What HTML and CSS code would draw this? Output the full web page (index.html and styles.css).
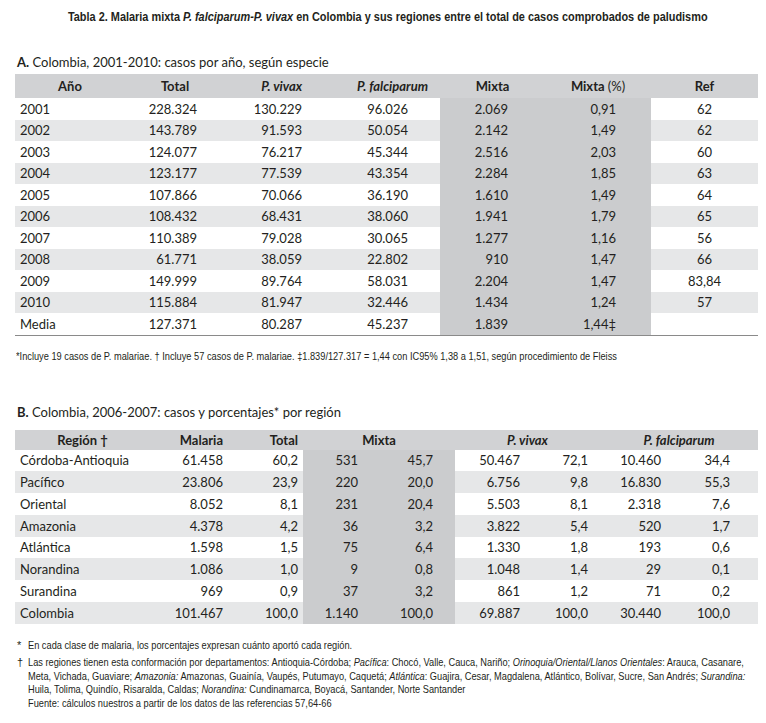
FILE: index.html
```html
<!DOCTYPE html>
<html lang="es">
<head>
<meta charset="utf-8">
<title>Tabla 2</title>
<link rel="stylesheet" href="styles.css">
</head>
<body>
<div class="page">
  <h1 class="title"><span class="cond-c">Tabla 2. Malaria mixta <i>P. falciparum-P. vivax</i> en Colombia y sus regiones entre el total de casos comprobados de paludismo</span></h1>

  <h2 class="sub sub-a"><b>A.</b> Colombia, 2001-2010: casos por año, según especie</h2>
  <table class="tbl ta">
    <colgroup>
      <col class="a1"><col class="a2"><col class="a3"><col class="a4"><col class="a5"><col class="a6"><col class="a7">
    </colgroup>
    <thead>
      <tr>
        <th class="c">Año</th>
        <th class="c">Total</th>
        <th class="r ha3"><i>P. vivax</i></th>
        <th class="r ha4"><i>P. falciparum</i></th>
        <th class="c">Mixta</th>
        <th class="c">Mixta <span class="pct">(%)</span></th>
        <th class="c">Ref</th>
      </tr>
    </thead>
    <tbody>
      <tr><td class="l">2001</td><td class="r da2">228.324</td><td class="r da3">130.229</td><td class="r da4">96.026</td><td class="r mx da5">2.069</td><td class="r mx da6">0,91</td><td class="c">62</td></tr>
      <tr class="s"><td class="l">2002</td><td class="r da2">143.789</td><td class="r da3">91.593</td><td class="r da4">50.054</td><td class="r mx da5">2.142</td><td class="r mx da6">1,49</td><td class="c">62</td></tr>
      <tr><td class="l">2003</td><td class="r da2">124.077</td><td class="r da3">76.217</td><td class="r da4">45.344</td><td class="r mx da5">2.516</td><td class="r mx da6">2,03</td><td class="c">60</td></tr>
      <tr class="s"><td class="l">2004</td><td class="r da2">123.177</td><td class="r da3">77.539</td><td class="r da4">43.354</td><td class="r mx da5">2.284</td><td class="r mx da6">1,85</td><td class="c">63</td></tr>
      <tr><td class="l">2005</td><td class="r da2">107.866</td><td class="r da3">70.066</td><td class="r da4">36.190</td><td class="r mx da5">1.610</td><td class="r mx da6">1,49</td><td class="c">64</td></tr>
      <tr class="s"><td class="l">2006</td><td class="r da2">108.432</td><td class="r da3">68.431</td><td class="r da4">38.060</td><td class="r mx da5">1.941</td><td class="r mx da6">1,79</td><td class="c">65</td></tr>
      <tr><td class="l">2007</td><td class="r da2">110.389</td><td class="r da3">79.028</td><td class="r da4">30.065</td><td class="r mx da5">1.277</td><td class="r mx da6">1,16</td><td class="c">56</td></tr>
      <tr class="s"><td class="l">2008</td><td class="r da2">61.771</td><td class="r da3">38.059</td><td class="r da4">22.802</td><td class="r mx da5">910</td><td class="r mx da6">1,47</td><td class="c">66</td></tr>
      <tr><td class="l">2009</td><td class="r da2">149.999</td><td class="r da3">89.764</td><td class="r da4">58.031</td><td class="r mx da5">2.204</td><td class="r mx da6">1,47</td><td class="c">83,84</td></tr>
      <tr class="s"><td class="l">2010</td><td class="r da2">115.884</td><td class="r da3">81.947</td><td class="r da4">32.446</td><td class="r mx da5">1.434</td><td class="r mx da6">1,24</td><td class="c">57</td></tr>
      <tr class="last"><td class="l">Media</td><td class="r da2">127.371</td><td class="r da3">80.287</td><td class="r da4">45.237</td><td class="r mx da5">1.839</td><td class="r mx da6">1,44‡</td><td class="c"></td></tr>
    </tbody>
  </table>
  <p class="note-a"><span class="cond">*Incluye 19 casos de P. malariae. † Incluye 57 casos de P. malariae. ‡1.839/127.317 = 1,44 con IC95% 1,38 a 1,51, según procedimiento de Fleiss</span></p>

  <h2 class="sub sub-b"><b>B.</b> Colombia, 2006-2007: casos y porcentajes* por región</h2>
  <table class="tbl tb">
    <colgroup>
      <col class="b1"><col class="b2"><col class="b3"><col class="b4"><col class="b5"><col class="b6"><col class="b7"><col class="b8"><col class="b9">
    </colgroup>
    <thead>
      <tr>
        <th class="c">Región †</th>
        <th class="r db2">Malaria</th>
        <th class="r db3">Total</th>
        <th class="c" colspan="2">Mixta</th>
        <th class="c hb6" colspan="2"><i>P. vivax</i></th>
        <th class="c" colspan="2"><i>P. falciparum</i></th>
      </tr>
    </thead>
    <tbody>
      <tr><td class="l">Córdoba-Antioquia</td><td class="r db2">61.458</td><td class="r db3">60,2</td><td class="r mx db4">531</td><td class="r mx db5">45,7</td><td class="r db6">50.467</td><td class="r db7">72,1</td><td class="r db8">10.460</td><td class="r db9">34,4</td></tr>
      <tr class="s"><td class="l">Pacífico</td><td class="r db2">23.806</td><td class="r db3">23,9</td><td class="r mx db4">220</td><td class="r mx db5">20,0</td><td class="r db6">6.756</td><td class="r db7">9,8</td><td class="r db8">16.830</td><td class="r db9">55,3</td></tr>
      <tr><td class="l">Oriental</td><td class="r db2">8.052</td><td class="r db3">8,1</td><td class="r mx db4">231</td><td class="r mx db5">20,4</td><td class="r db6">5.503</td><td class="r db7">8,1</td><td class="r db8">2.318</td><td class="r db9">7,6</td></tr>
      <tr class="s"><td class="l">Amazonia</td><td class="r db2">4.378</td><td class="r db3">4,2</td><td class="r mx db4">36</td><td class="r mx db5">3,2</td><td class="r db6">3.822</td><td class="r db7">5,4</td><td class="r db8">520</td><td class="r db9">1,7</td></tr>
      <tr><td class="l">Atlántica</td><td class="r db2">1.598</td><td class="r db3">1,5</td><td class="r mx db4">75</td><td class="r mx db5">6,4</td><td class="r db6">1.330</td><td class="r db7">1,8</td><td class="r db8">193</td><td class="r db9">0,6</td></tr>
      <tr class="s"><td class="l">Norandina</td><td class="r db2">1.086</td><td class="r db3">1,0</td><td class="r mx db4">9</td><td class="r mx db5">0,8</td><td class="r db6">1.048</td><td class="r db7">1,4</td><td class="r db8">29</td><td class="r db9">0,1</td></tr>
      <tr><td class="l">Surandina</td><td class="r db2">969</td><td class="r db3">0,9</td><td class="r mx db4">37</td><td class="r mx db5">3,2</td><td class="r db6">861</td><td class="r db7">1,2</td><td class="r db8">71</td><td class="r db9">0,2</td></tr>
      <tr class="s"><td class="l">Colombia</td><td class="r db2">101.467</td><td class="r db3">100,0</td><td class="r mx db4">1.140</td><td class="r mx db5">100,0</td><td class="r db6">69.887</td><td class="r db7">100,0</td><td class="r db8">30.440</td><td class="r db9">100,0</td></tr>
    </tbody>
  </table>

  <div class="notes">
    <div class="note first"><span class="mk">*</span><span class="tx cond">En cada clase de malaria, los porcentajes expresan cuánto aportó cada región.</span></div>
    <div class="note"><span class="mk">†</span><span class="tx cond">Las regiones tienen esta conformación por departamentos: Antioquia-Córdoba; <i>Pacífica</i>: Chocó, Valle, Cauca, Nariño; <i>Orinoquia/Oriental/Llanos Orientales</i>: Arauca, Casanare,<br>Meta, Vichada, Guaviare; <i>Amazonia:</i> Amazonas, Guainía, Vaupés, Putumayo, Caquetá; <i>Atlántica</i>: Guajira, Cesar, Magdalena, Atlántico, Bolívar, Sucre, San Andrés; <i>Surandina:</i><br>Huila, Tolima, Quindío, Risaralda, Caldas; <i>Norandina:</i> Cundinamarca, Boyacá, Santander, Norte Santander</span></div>
    <div class="note"><span class="mk"></span><span class="tx cond">Fuente: cálculos nuestros a partir de los datos de las referencias 57,64-66</span></div>
  </div>
</div>
</body>
</html>
```

FILE: styles.css
```css
html, body {
  margin: 0;
  padding: 0;
  background: #ffffff;
}

body {
  color: #231f20;
  font-family: Lato, "Open Sans", sans-serif;
  width: 766px;
  height: 723px;
  overflow: hidden;
}

.page {
  padding: 8px 8px 0 15px;
}

/* condensed text: Arial metrics squeezed horizontally */
.cond,
.cond-c {
  display: inline-block;
  white-space: nowrap;
  font-family: "Liberation Sans", Arial, sans-serif;
}

.cond {
  transform: scaleX(0.84);
  transform-origin: 0 0;
}

.cond-c {
  transform: scaleX(0.84);
  transform-origin: 50% 0;
}

.title {
  margin: 0 -32px 0 -30px;
  font-size: 13px;
  line-height: 16px;
  font-weight: bold;
  text-align: center;
  white-space: nowrap;
}

.sub {
  margin: 0;
  font-size: 13px;
  line-height: 16px;
  font-weight: normal;
  padding-left: 2px;
}

.sub-a {
  margin-top: 29px;
}

.sub-b {
  margin-top: 41px;
}

.tbl {
  width: 743px;
  table-layout: fixed;
  border-collapse: collapse;
  border-spacing: 0;
  font-size: 13px;
}

.ta {
  margin-top: 4px;
  border-bottom: 1px solid #8a8a8a;
}

.tb {
  margin-top: 10px;
}

.tbl th,
.tbl td {
  padding: 0;
  white-space: nowrap;
}

.tbl thead tr {
  background: #d1d2d4;
}

.tbl th {
  font-weight: bold;
}

.ta th { height: 24px; }
.ta td { height: 21.5px; }
.tb th { height: 20px; }
.tb td { height: 21.75px; }

.tbl tr.s { background: #e6e7e8; }
.tbl td.mx { background: #cbccce; }

.pct { font-weight: normal; }

.c { text-align: center; }
.r { text-align: right; }
.l { text-align: left; padding-left: 5px !important; }

/* table A columns */
.a1 { width: 110px; }
.a2 { width: 100px; }
.a3 { width: 85px; }
.a4 { width: 130px; }
.a5 { width: 105px; }
.a6 { width: 106px; }
.a7 { width: 107px; }

.ha3 { padding-right: 8px !important; }
.ha4 { padding-right: 12px !important; }
.da2 { padding-right: 28px !important; }
.da3 { padding-right: 8px !important; }
.da4 { padding-right: 32px !important; }
.da5 { padding-right: 37px !important; }
.da6 { padding-right: 35px !important; }

/* table B columns */
.b1 { width: 135px; }
.b2 { width: 80px; }
.b3 { width: 73px; }
.b4 { width: 67px; }
.b5 { width: 85px; }
.b6 { width: 75px; }
.b7 { width: 70px; }
.b8 { width: 70px; }
.b9 { width: 88px; }

.db2 { padding-right: 7px !important; }
.db3 { padding-right: 5px !important; }
.db4 { padding-right: 12px !important; }
.db5 { padding-right: 22px !important; }
.db6 { padding-right: 10px !important; }
.db7 { padding-right: 12px !important; }
.db8 { padding-right: 9px !important; }
.db9 { padding-right: 28px !important; }

.note-a {
  margin: 13px 0 0 1px;
  font-size: 11px;
  line-height: 14px;
  height: 14px;
}

.notes {
  margin-top: 15px;
  font-size: 11px;
  line-height: 13.5px;
}

.note {
  display: flex;
}

.note.first {
  margin-bottom: 4px;
}

.mk {
  flex: 0 0 13px;
  padding-left: 2px;
  box-sizing: border-box;
  font-family: "Liberation Sans", Arial, sans-serif;
}

.tx {
  flex: 0 0 auto;
}
```
